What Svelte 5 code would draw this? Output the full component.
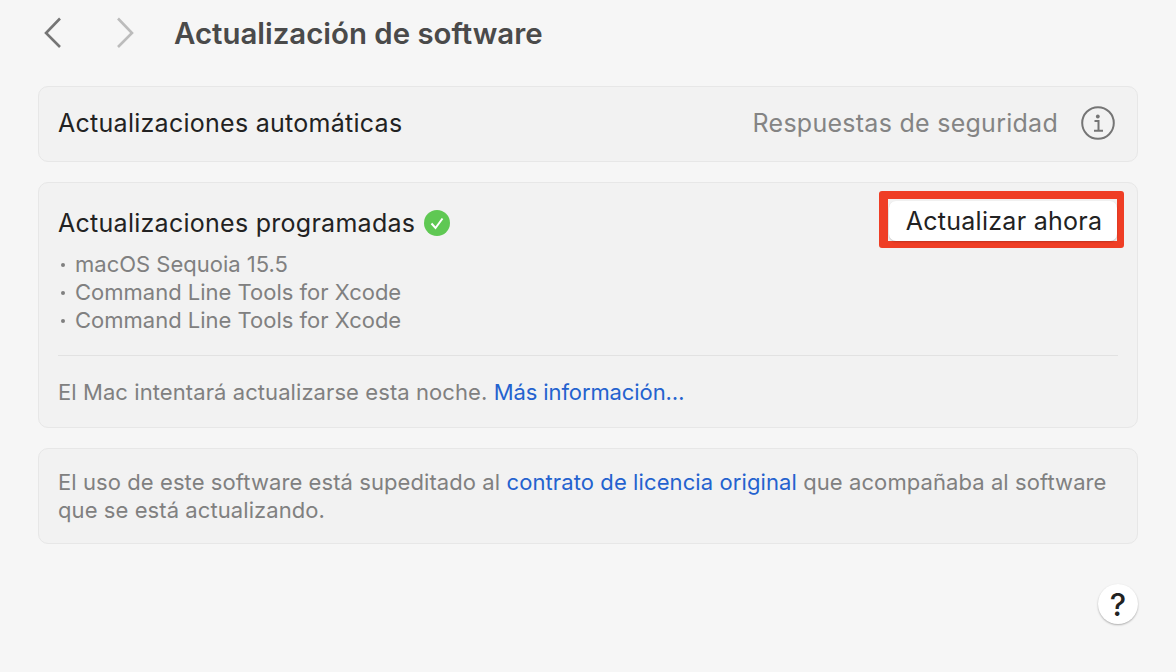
<script>
  const items = ['macOS Sequoia 15.5', 'Command Line Tools for Xcode', 'Command Line Tools for Xcode'];
</script>

<div class="page">
  <header class="top">
    <svg class="chev back" width="20" height="32" viewBox="0 0 20 32"><path d="M17 1.500 L3 16 L17 30" /></svg>
    <svg class="chev fwd" width="20" height="32" viewBox="0 0 20 32"><path d="M3 1.500 L17 16 L3 30" /></svg>
    <h1>Actualización de software</h1>
  </header>

  <section class="card auto">
    <span class="label">Actualizaciones automáticas</span>
    <span class="right">
      <span class="value">Respuestas de seguridad</span>
      <svg width="34" height="34" viewBox="0 0 34 34" class="info">
        <circle cx="17" cy="17" r="15.800" />
        <circle class="dot" cx="16.800" cy="10.500" r="1.900" />
        <path d="M13.500 15 H17.500 V24.500 M13 24.800 H22" />
      </svg>
    </span>
  </section>

  <section class="card sched">
    <div class="head">
      <div class="title">
        <span class="label">Actualizaciones programadas</span>
        <svg width="26" height="26" viewBox="0 0 26 26">
          <circle cx="13" cy="13" r="13" fill="#5fc853" />
          <path d="M7.500 13.500 L11.500 18 L18.500 8.500" fill="none" stroke="#fff" stroke-width="2" />
        </svg>
      </div>
      <div class="mark"><button>Actualizar ahora</button></div>
    </div>
    <ul>
      {#each items as item}
        <li>{item}</li>
      {/each}
    </ul>
    <hr />
    <p class="note">El Mac intentará actualizarse esta noche. <span class="link">Más información…</span></p>
  </section>

  <section class="card legal">
    <p>El uso de este software está supeditado al <span class="link">contrato de licencia original</span> que acompañaba al software que se está actualizando.</p>
  </section>

  <div class="help"><span>?</span></div>
</div>

<style>
  :global(body) { margin: 0; background: #f6f6f6; }
  .page {
    width: 1176px; height: 672px; box-sizing: border-box; padding: 0 38px;
    background: #f6f6f6; font-family: Inter, "Noto Sans", sans-serif; overflow: hidden;
    display: flex; flex-direction: column;
  }
  .top { height: 86px; flex: none; display: flex; align-items: flex-start; padding-top: 17px; box-sizing: border-box; }
  .chev { fill: none; stroke-width: 2.6; flex: none; }
  .back { margin-left: 5px; stroke: #757575; }
  .fwd { margin-left: 52px; stroke: #bcbcbc; }
  h1 { margin: 0 0 0 39px; font-size: 29.400px; line-height: 34px; font-weight: 600; color: #4a4a4a; }
  .card {
    box-sizing: border-box; background: #f2f2f2; border: 1px solid #e7e7e7; border-radius: 10px;
    margin-bottom: 20px; padding: 0 19px; flex: none;
  }
  .auto { height: 76px; display: flex; align-items: center; justify-content: space-between; padding-bottom: 2px; }
  .label { font-size: 25px; line-height: 30px; color: #222; letter-spacing: 0.27px; }
  .right { display: flex; align-items: center; gap: 23px; margin-right: 3px; }
  .value { font-size: 25px; color: #848484; letter-spacing: 0.27px; }
  .info { fill: none; stroke: #757575; stroke-width: 2; }
  .info .dot { fill: #757575; stroke: none; }
  .sched { height: 246px; padding-top: 8px; }
  .head { display: flex; justify-content: space-between; align-items: flex-start; margin-right: -6px; }
  .title { display: flex; align-items: center; gap: 9px; margin-top: 17px; }
  .mark { border-style: solid; border-color: #ef3e25; border-width: 8px 7px 7px 9px; border-radius: 3px; padding: 2px 0 0 1px; }
  button {
    display: block; width: 228px; height: 40px; padding: 0 0 0 2px; border: 0; border-radius: 7px; background: #fff;
    font: 400 25px Inter, sans-serif; letter-spacing: 0.27px; color: #222; box-shadow: 0 1px 2px rgba(0,0,0,.2);
  }
  ul { list-style: none; margin: 2px 0 0; padding: 0; }
  li { font-size: 22px; line-height: 28px; color: #808080; padding-left: 17px; position: relative; }
  li::before { content: ""; position: absolute; left: 3px; top: 13px; width: 4px; height: 4px; border-radius: 50%; background: #808080; }
  hr { border: 0; border-top: 1px solid #e2e2e2; margin: 21px 0 0; }
  .note { margin: 22px 0 0; font-size: 22px; line-height: 28px; color: #808080; letter-spacing: 0.08px; }
  .note .link { letter-spacing: -0.1px; }
  .link { color: #2462cf; }
  .legal { height: 96px; padding-top: 19px; }
  .legal p { margin: 0; font-size: 22px; line-height: 28px; color: #808080; letter-spacing: 0.08px; }
  .legal .link { letter-spacing: 0.1px; }
  .help {
    position: absolute; left: 1098px; top: 584px; width: 40px; height: 40px; border-radius: 50%; background: #fff;
    box-shadow: 0 1px 2px rgba(0,0,0,.3); display: flex; align-items: center; justify-content: center;
    font-size: 31px; font-weight: 500; color: #222;
  }
</style>
